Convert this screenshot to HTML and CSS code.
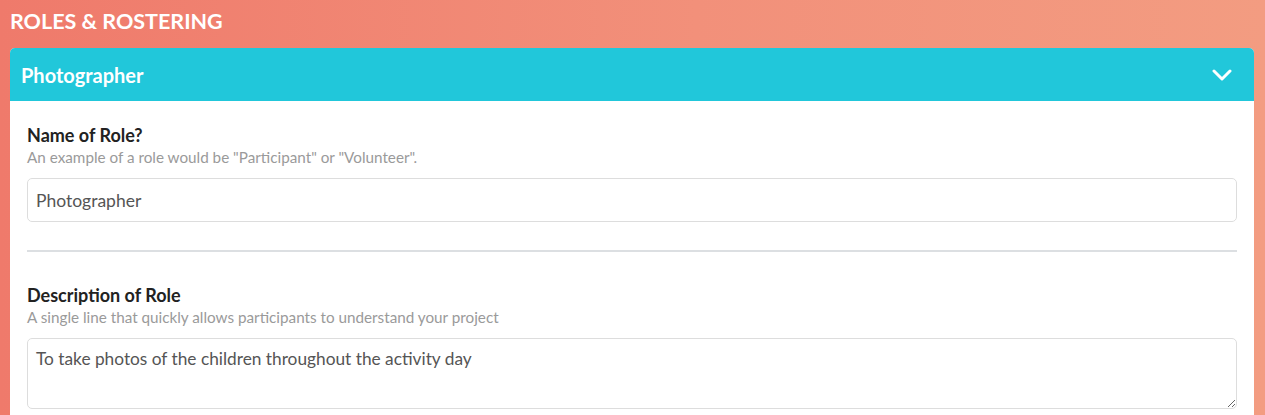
FILE: index.html
```html
<!DOCTYPE html>
<html>
<head>
<meta charset="utf-8">
<link rel="stylesheet" href="styles.css">
</head>
<body>
<div class="page">
  <h1 class="page-title">ROLES &amp; ROSTERING</h1>
  <div class="card">
    <div class="card-header">
      <span class="card-title">Photographer</span>
      <svg class="chevron" width="20" height="12" viewBox="0 0 20 12"><path d="M2 2 L10 10 L18 2" fill="none" stroke="#fff" stroke-width="3" stroke-linecap="round" stroke-linejoin="round"/></svg>
    </div>
    <div class="card-body">
      <div class="field">
        <label class="field-label">Name of Role?</label>
        <div class="field-help">An example of a role would be "Participant" or "Volunteer".</div>
        <input class="text-input" type="text" value="Photographer">
      </div>
      <hr class="divider">
      <div class="field">
        <label class="field-label">Description of Role</label>
        <div class="field-help">A single line that quickly allows participants to understand your project</div>
        <textarea class="text-area">To take photos of the children throughout the activity day</textarea>
      </div>
    </div>
  </div>
</div>
</body>
</html>
```

FILE: styles.css
```css
html, body {
  margin: 0;
  padding: 0;
  height: 100%;
  overflow: hidden;
}
body {
  font-family: Lato, "Liberation Sans", sans-serif;
  background: linear-gradient(90deg, #ef7a6b 0%, #f2907a 55%, #f39c81 100%);
}
.page {
  padding: 0 11px 0 10px;
}
.page-title {
  margin: 0;
  padding: 8px 0 0 0;
  height: 40px;
  box-sizing: border-box;
  font-size: 21.5px;
  font-weight: 700;
  color: #fff;
  line-height: 26px;
}
.card {
  background: #fff;
  border-radius: 5px 5px 0 0;
  overflow: hidden;
  margin-top: 8px;
}
.card-header {
  background: #21c7da;
  height: 53px;
  display: flex;
  align-items: center;
  justify-content: space-between;
  padding: 0 22px 0 11px;
}
.card-title {
  color: #fff;
  font-size: 20px;
  font-weight: 700;
}
.chevron {
  display: block;
}
.card-body {
  padding: 22px 17px 20px 17px;
}
.field-label {
  display: block;
  font-size: 18px;
  font-weight: 700;
  color: #222;
  line-height: 24px;
}
.field-help {
  font-size: 15.25px;
  color: #9a9a9a;
  line-height: 20px;
  margin-bottom: 11px;
}
.text-input, .text-area {
  display: block;
  width: 100%;
  box-sizing: border-box;
  border: 1px solid #ddd;
  border-radius: 5px;
  font-family: Lato, "Liberation Sans", sans-serif;
  font-size: 17.5px;
  color: #555;
  padding: 0 8px;
  margin: 0;
  outline: none;
}
.text-input {
  height: 44px;
}
.text-area {
  height: 71px;
  padding-top: 9px;
  font-size: 17.3px;
  resize: vertical;
}
.divider {
  border: 0;
  border-top: 2px solid #dcdfe2;
  margin: 28px 0 31px 0;
}
```
